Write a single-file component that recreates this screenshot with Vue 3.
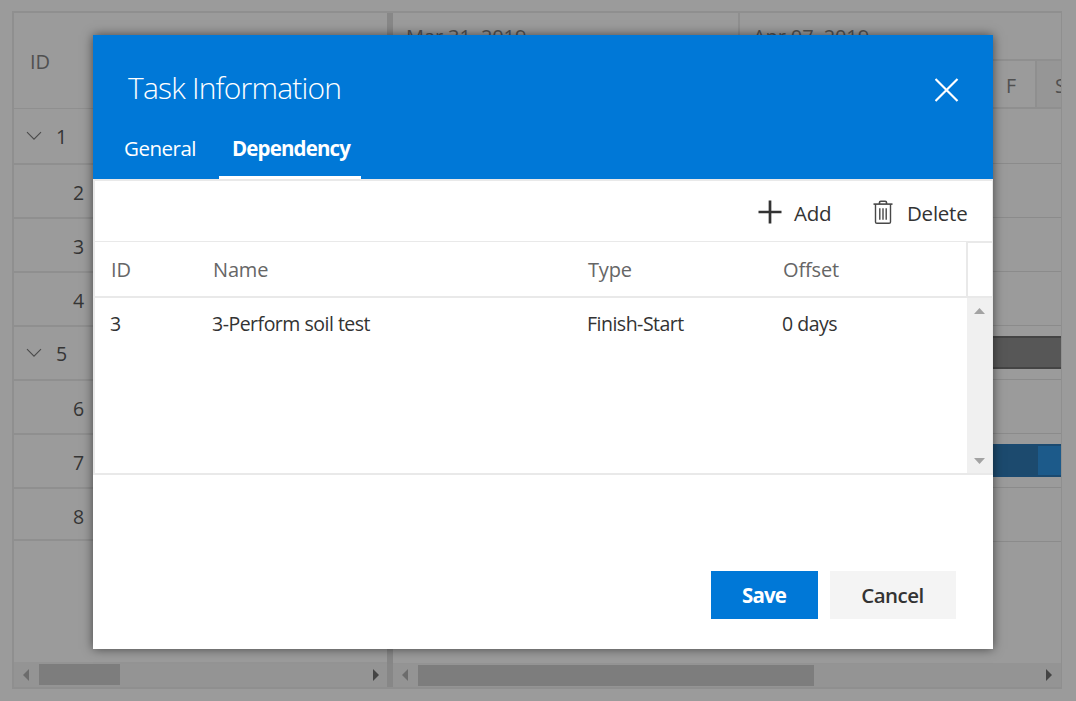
<script setup>
const rows = [
  { id: 1, parent: true }, { id: 2 }, { id: 3 }, { id: 4 },
  { id: 5, parent: true }, { id: 6 }, { id: 7 }, { id: 8 },
]
const columns = [
  { key: 'id', label: 'ID', value: '3' },
  { key: 'name', label: 'Name', value: '3-Perform soil test' },
  { key: 'type', label: 'Type', value: 'Finish-Start' },
  { key: 'offset', label: 'Offset', value: '0 days' },
]
</script>

<template>
  <div class="page">
    <div class="gantt">
      <section class="tree">
        <div class="tree-head"><span>ID</span></div>
        <div v-for="r in rows" :key="r.id" class="tree-row" :class="{ parent: r.parent, first: r.id === 1, last: r.id === 8 }">
          <svg v-if="r.parent" class="chevron" width="16" height="10" viewBox="0 0 16 10"><path d="M1 1.2 8 8.2 15 1.2" fill="none" stroke="#4b4b4b" stroke-width="1.1" /></svg>
          <span>{{ r.id }}</span>
        </div>
        <div class="space"></div>
        <div class="hbar hbar-left">
          <svg width="6" height="12" viewBox="0 0 6 12"><path d="M6 0V12L0 6Z" fill="#6c6c6c" /></svg>
          <i class="thumb"></i>
          <svg class="end" width="6" height="12" viewBox="0 0 6 12"><path d="M0 0V12L6 6Z" fill="#444" /></svg>
        </div>
      </section>
      <div class="splitter"></div>
      <section class="chart">
        <div class="weeks"><div class="week w1"><span>Mar 31, 2019</span></div><div class="week"><span>Apr 07, 2019</span></div></div>
        <div class="days"><div class="day f">F</div><div class="day s">S</div></div>
        <div v-for="r in rows" :key="r.id" class="chart-row" :class="{ first: r.id === 1 }">
          <div v-if="r.id === 5" class="bar summary"></div>
          <div v-if="r.id === 7" class="bar task"><i></i></div>
        </div>
        <div class="space"></div>
        <div class="hbar hbar-right">
          <svg width="6" height="12" viewBox="0 0 6 12"><path d="M6 0V12L0 6Z" fill="#6c6c6c" /></svg>
          <i class="thumb"></i>
          <svg class="end" width="6" height="12" viewBox="0 0 6 12"><path d="M0 0V12L6 6Z" fill="#444" /></svg>
        </div>
      </section>
    </div>

    <div class="dialog">
      <header>
        <div class="title-row">
          <h1>Task Information</h1>
          <svg class="close" width="24" height="24" viewBox="0 0 24 24"><path d="M.5 1 22.5 23M22.5 1 .5 23" stroke="#fff" stroke-width="2.2" /></svg>
        </div>
        <nav><div class="tab general"><span>General</span></div><div class="tab active"><span>Dependency</span></div></nav>
      </header>
      <div class="panel">
        <div class="toolbar">
          <svg class="plus" width="24" height="24" viewBox="0 0 24 24"><path d="M12 0.5V23.5M.5 12H23.5" stroke="#333" stroke-width="2.7" /></svg>
          <span class="t-add">Add</span>
          <svg class="trash" width="20" height="25" viewBox="0 0 20 25" fill="none" stroke="#484848"><path d="M.5 4.1H19.5" stroke-width="1.6" /><path d="M6.5 4V2.5Q6.5 1.2 7.8 1.2H12.2Q13.5 1.2 13.5 2.5V4" stroke-width="1.6" /><path d="M2.5 4V21.9Q2.5 23.3 3.9 23.3H16.1Q17.5 23.3 17.5 21.9V4" stroke-width="1.4" /><path d="M6.8 8.3V19.8M10 8.3V19.8M13.2 8.3V19.8" stroke-width="1.4" /></svg>
          <span class="t-delete">Delete</span>
        </div>
        <div class="thead">
          <div v-for="c in columns" :key="c.key" :class="['col', c.key]"><span>{{ c.label }}</span></div>
          <div class="gutter"></div>
        </div>
        <div class="tbody">
          <div v-for="c in columns" :key="c.key" :class="['col', c.key]"><span>{{ c.value }}</span></div>
          <div class="vbar">
            <svg width="11" height="6" viewBox="0 0 11 6"><path d="M0 6H11L5.5 0Z" fill="#a3a3a3" /></svg>
            <svg width="11" height="6" viewBox="0 0 11 6"><path d="M0 0H11L5.5 6Z" fill="#a3a3a3" /></svg>
          </div>
        </div>
      </div>
      <footer><button class="save"><span>Save</span></button><button class="cancel"><span>Cancel</span></button></footer>
    </div>
  </div>
</template>

<style>
body { margin: 0; overflow: hidden; }
</style>

<style scoped>
* { box-sizing: border-box; }
span { white-space: nowrap; }
svg { display: block; flex: none; }
.page { position: relative; width: 1076px; height: 701px; background: #9b9b9b; overflow: hidden; padding: 11px 14px 12px 12px; font: 19.5px/26px "Open Sans", "Noto Sans", sans-serif; color: #333; }
.gantt { display: flex; width: 1050px; height: 678px; border: 2px solid #8f8f8f; border-right-width: 1px; }
.tree { width: 373px; display: flex; flex-direction: column; }
.tree-head { height: 96px; border-bottom: 1px solid #8f8f8f; padding: 36px 0 0 16px; color: #505050; font-size: 20px; }
.tree-row { height: 54px; border-bottom: 2px solid #8f8f8f; display: flex; align-items: center; padding: 3px 0 0 59px; color: #353535; }
.tree-row.first { height: 56px; }
.tree-row.last { height: 52px; padding-top: 6px; }
.tree-row.parent { padding: 2px 0 0 12px; }
.chevron { margin: -2px 14px 0 0; }
.space { flex: 1; }
.hbar { height: 25px; background: #949494; display: flex; align-items: center; flex: none; }
.hbar-left { padding: 0 8px 0 9px; }
.hbar-right { height: 24px; padding: 0 9px 0 9px; }
.thumb { height: 21px; background: #7d7d7d; margin-left: 10px; width: 81px; }
.hbar-right .thumb { width: 396px; }
.end { margin-left: auto; }
.splitter { width: 6px; background: #878787; }
.chart { flex: 1; display: flex; flex-direction: column; overflow: hidden; }
.weeks { height: 48px; display: flex; border-bottom: 2px solid #8f8f8f; color: #505050; font-size: 20px; letter-spacing: -.1px; }
.week { padding: 11px 0 0 13px; flex: 1; }
.w1 { flex: none; width: 347px; border-right: 2px solid #8f8f8f; }
.days { height: 48px; display: flex; justify-content: flex-end; border-bottom: 2px solid #8f8f8f; color: #505050; }
.day { padding-top: 12px; overflow: hidden; }
.f { width: 51px; padding-left: 20px; border-right: 2px solid #8f8f8f; }
.s { width: 24px; padding-left: 18px; background: #969696; }
.chart-row { height: 54px; border-bottom: 1px solid #8b8b8b; padding-top: 10px; display: flex; justify-content: flex-end; flex: none; }
.chart-row.first { height: 55px; }
.bar { width: 100px; height: 33px; }
.summary { background: #575757; border: solid #444; border-width: 2px 0; }
.task { background: #1c4a6e; display: flex; justify-content: flex-end; border: solid #1b4a70; border-width: 2px 0; }
.task i { width: 23px; background: #1c5a8a; }

.dialog { position: absolute; left: 93px; top: 35px; width: 900px; height: 614px; background: #fff; box-shadow: 0 0 10px rgba(0,0,0,.55); display: flex; flex-direction: column; }
header { height: 144px; background: #0078d7; color: #fff; flex: none; }
.title-row { height: 90px; display: flex; justify-content: space-between; padding: 33px 34px 0 35px; }
h1 { margin: 0; font-size: 30px; line-height: 40px; font-weight: 300; white-space: nowrap; letter-spacing: -.8px; }
.close { margin-top: 10px; }
nav { display: flex; height: 54px; font-weight: 500; font-size: 20.5px; line-height: 28px; letter-spacing: -.5px; }
.general { width: 126px; padding: 9px 0 0 31px; }
.active { width: 142px; padding: 9px 0 0 13px; border-bottom: 3px solid #fff; font-weight: 700; letter-spacing: -.85px; }
.panel { height: 296px; border: 2px solid #e9e9e9; border-right-width: 1px; flex: none; }
.toolbar { height: 61px; border-bottom: 1px solid #e9e9e9; display: flex; justify-content: flex-end; font-size: 20.5px; line-height: 28px; letter-spacing: -.25px; padding: 18px 25px 0 0; }
.plus { margin: 1px 12px 0 0; }
.t-add { width: 38px; margin-right: 41px; }
.trash { margin: 1px 14px 0 0; }
.t-delete { width: 60px; }
.thead { height: 56px; border-bottom: 2px solid #e9e9e9; display: flex; color: #666; font-size: 20px; letter-spacing: -.15px; }
.thead .col { padding-top: 15px; }
.tbody { height: 175px; display: flex; letter-spacing: -.5px; }
.tbody .col { padding-top: 13px; }
.col.id { width: 102px; padding-left: 15px; }
.col.name { width: 375px; padding-left: 15px; }
.col.type { width: 195px; padding-left: 15px; }
.col.offset { flex: 1; padding-left: 15px; }
.thead .col { text-indent: 1px; }
.gutter { width: 26px; border-left: 2px solid #e9e9e9; border-top: 1px solid #e9e9e9; }
.vbar { width: 25px; background: #f0f0f0; display: flex; flex-direction: column; align-items: center; justify-content: space-between; padding: 10px 0 9px; }
footer { display: flex; justify-content: flex-end; gap: 12px; padding: 96px 37px 0 0; }
button { font: 600 20.5px/28px "Open Sans", sans-serif; height: 48px; border: 0; padding: 0 0 1px; letter-spacing: -.5px; }
.save { width: 107px; background: #0078d7; color: #fff; font-weight: 700; letter-spacing: -.9px; }
.cancel { width: 126px; background: #f4f4f4; color: #333; }
.save, .cancel { padding-right: 1px; }
</style>
